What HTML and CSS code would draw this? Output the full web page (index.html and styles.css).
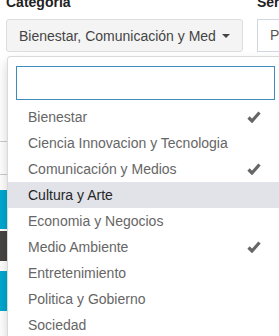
FILE: index.html
```html
<!DOCTYPE html>
<html>
<head>
    <title>Filtros</title>
    <link rel="stylesheet" href="styles.css">
</head>
<body>
    <div class="page">
        <div class="filters">
            <div class="field field-cat">
                <label class="field-label">Categoria</label>
                <div class="select">
                    <button type="button" class="select-btn">
                        <span class="select-text">Bienestar, Comunicación y Medio Ambiente</span>
                        <span class="caret"></span>
                    </button>

                    <div class="select-menu">
                        <div class="searchbox">
                            <input type="text" class="search-input">
                        </div>
                        <ul class="options">
                            <li class="option selected"><span>Bienestar</span><svg class="check" viewBox="0 0 14 12"><path d="M1.5 6.5 L5 10 L12.5 1.5" /></svg></li>
                            <li class="option"><span>Ciencia Innovacion y Tecnologia</span></li>
                            <li class="option selected"><span>Comunicación y Medios</span><svg class="check" viewBox="0 0 14 12"><path d="M1.5 6.5 L5 10 L12.5 1.5" /></svg></li>
                            <li class="option active"><span>Cultura y Arte</span></li>
                            <li class="option"><span>Economia y Negocios</span></li>
                            <li class="option selected"><span>Medio Ambiente</span><svg class="check" viewBox="0 0 14 12"><path d="M1.5 6.5 L5 10 L12.5 1.5" /></svg></li>
                            <li class="option"><span>Entretenimiento</span></li>
                            <li class="option"><span>Politica y Gobierno</span></li>
                            <li class="option"><span>Sociedad</span></li>
                        </ul>
                    </div>
                </div>
            </div>

            <div class="field field-ser">
                <label class="field-label">Servicio</label>
                <div class="plain-box">Por servicio</div>
            </div>
        </div>

        <!-- content behind the open menu -->
        <div class="behind">
            <div class="rule rule-top"></div>
            <div class="rule rule-mid"></div>
            <div class="tile tile-aqua"></div>
            <div class="tile tile-dark"></div>
            <div class="tile tile-aqua tile-last"></div>
        </div>
    </div>
</body>
</html>
```

FILE: styles.css
```css
html, body {
    margin: 0;
    padding: 0;
    background-color: #ffffff;
    overflow: hidden;
}

body {
    width: 279px;
    height: 336px;
    font-family: "Liberation Sans", Arial, sans-serif;
    font-size: 14px;
    line-height: 20px;
    color: #333;
}

.page {
    position: relative;
}

.filters {
    display: flex;
    gap: 14px;
    padding-left: 6px;
    margin-top: -8px;
}

.field-cat {
    width: 237px;
    flex-shrink: 0;
}

.field-ser {
    width: 120px;
    flex-shrink: 0;
}

.field-label {
    display: block;
    font-weight: bold;
    color: #222;
    margin-bottom: 7px;
}

.select {
    position: relative;
}

.select-btn {
    display: flex;
    align-items: center;
    width: 100%;
    height: 33px;
    padding: 0 12px 0 12px;
    border: 1px solid #ddd;
    border-radius: 3px;
    background-color: #f4f4f4;
    color: #444;
    font-family: inherit;
    font-size: 14px;
    box-sizing: border-box;
    cursor: pointer;
}

.select-text {
    flex: 1;
    overflow: hidden;
    white-space: nowrap;
    text-align: left;
    margin-right: 6px;
}

.caret {
    width: 0;
    height: 0;
    border-top: 4px solid #444;
    border-left: 4px solid transparent;
    border-right: 4px solid transparent;
}

.plain-box {
    height: 33px;
    padding: 0 12px;
    border: 1px solid #d2d6de;
    background-color: #fff;
    color: #555;
    line-height: 31px;
    box-sizing: border-box;
    white-space: nowrap;
}

.select-menu {
    position: absolute;
    top: 100%;
    left: 1px;
    width: 277px;
    margin-top: 4px;
    padding-top: 5px;
    background-color: #ffffff;
    border: 1px solid rgba(0, 0, 0, 0.15);
    border-radius: 4px;
    box-shadow: 0 6px 12px rgba(0, 0, 0, 0.175);
    box-sizing: border-box;
    z-index: 10;
}

.searchbox {
    padding: 4px 8px;
}

.search-input {
    display: block;
    width: 100%;
    height: 34px;
    border: 1px solid #3c8dbc;
    box-sizing: border-box;
    outline: none;
}

.options {
    list-style: none;
    margin: 0;
    padding: 0;
}

.option {
    display: flex;
    justify-content: space-between;
    align-items: center;
    height: 26px;
    padding: 0 22px 0 20px;
    color: #666;
    white-space: nowrap;
}

.option.active {
    background-color: #e1e3e9;
    color: #262626;
}

.check {
    width: 14px;
    height: 12px;
    fill: none;
    stroke: #666;
    stroke-width: 3.2;
}

.behind {
    display: flex;
    flex-direction: column;
    width: 7px;
}

.rule {
    height: 1px;
    background-color: #ccc;
}

.rule-top {
    margin-top: 89px;
}

.rule-mid {
    margin-top: 32px;
}

.tile {
    height: 39px;
}

.tile-aqua {
    background-color: #00a7d0;
}

.tile-dark {
    background-color: #484442;
    height: 30px;
}

.rule-mid + .tile {
    margin-top: 15px;
}

.tile-dark {
    margin-top: 2px;
}

.tile-last {
    margin-top: 10px;
    height: 40px;
}
```
